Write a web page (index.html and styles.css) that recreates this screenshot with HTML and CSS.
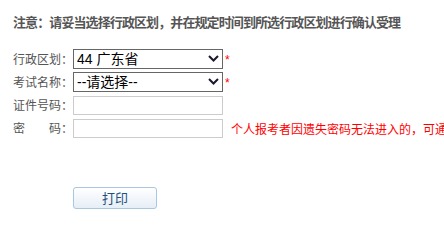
FILE: index.html
```html
<!DOCTYPE html>
<html lang="zh-CN">
<head>
<meta charset="utf-8">
<title>确认受理</title>
<link rel="stylesheet" href="styles.css">
</head>
<body>
<div class="page">
  <p class="notice">注意：请妥当选择行政区划，并在规定时间到所选行政区划进行确认受理</p>
  <form class="form">
    <div class="grid">
      <label class="label">行政区划：</label>
      <div class="field">
        <div class="select-wrap">
          <select class="select"><option>44 广东省</option></select>
          <svg class="chev" width="11" height="7" viewBox="0 0 11 7"><path d="M1 1 L5.5 5.5 L10 1" fill="none" stroke="#1a1a2e" stroke-width="2"/></svg>
        </div>
        <span class="req">*</span>
      </div>
      <label class="label">考试名称：</label>
      <div class="field">
        <div class="select-wrap">
          <select class="select"><option>--请选择--</option></select>
          <svg class="chev" width="11" height="7" viewBox="0 0 11 7"><path d="M1 1 L5.5 5.5 L10 1" fill="none" stroke="#1a1a2e" stroke-width="2"/></svg>
        </div>
        <span class="req">*</span>
      </div>
      <label class="label">证件号码：</label>
      <div class="field">
        <input class="input" type="text">
      </div>
      <label class="label">密　　码：</label>
      <div class="field">
        <input class="input" type="password">
        <span class="hint">个人报考者因遗失密码无法进入的，可通过</span>
      </div>
    </div>
    <div class="actions">
      <button class="btn" type="button">打印</button>
    </div>
  </form>
</div>
</body>
</html>
```

FILE: styles.css
```css
html, body {
  margin: 0;
  padding: 0;
  background: #fff;
}
.page {
  padding: 14px 0 0 13px;
  font-family: "Noto Sans CJK SC", "Liberation Sans", sans-serif;
  white-space: nowrap;
  overflow: hidden;
}
.notice {
  margin: 0;
  font-size: 13px;
  line-height: 16px;
  font-weight: bold;
  color: #555;
  letter-spacing: -0.9px;
}
.form {
  margin: 19px 0 0 0;
}
.grid {
  display: grid;
  grid-template-columns: 60px auto;
  grid-auto-rows: 20px;
  row-gap: 3px;
}
.label {
  font-size: 12px;
  line-height: 20px;
  color: #555;
}
.field {
  display: flex;
  align-items: center;
}
.select-wrap {
  position: relative;
  width: 150px;
  height: 20px;
}
.select {
  display: block;
  appearance: none;
  -webkit-appearance: none;
  box-sizing: border-box;
  width: 150px;
  height: 20px;
  margin: 0;
  padding: 0 0 0 3px;
  border: 1px solid #666;
  border-radius: 0;
  background: #fff;
  color: #000;
  font-family: "Liberation Sans", "Noto Sans CJK SC", sans-serif;
  font-size: 14px;
  line-height: 18px;
}
.chev {
  position: absolute;
  right: 4px;
  top: 6px;
  pointer-events: none;
}
.req {
  margin-left: 2px;
  color: #f00;
  font-size: 12px;
  line-height: 12px;
  font-family: "Liberation Sans", sans-serif;
  align-self: flex-start;
  margin-top: 5px;
}
.input {
  display: block;
  box-sizing: border-box;
  width: 150px;
  height: 19px;
  margin: 0;
  padding: 0 2px;
  border: 1px solid #ccc;
  border-radius: 0;
  background: #fff;
  outline: none;
}
.hint {
  margin-left: 8px;
  font-size: 12px;
  color: #f00;
}
.actions {
  margin: 49px 0 0 60px;
}
.btn {
  display: block;
  box-sizing: border-box;
  width: 84px;
  height: 22px;
  padding: 0;
  border: 1px solid #a9c6e2;
  border-radius: 3px;
  background: linear-gradient(#ffffff, #e6eef6);
  color: #1f4f7d;
  font-family: "Noto Sans CJK SC", sans-serif;
  font-size: 13px;
  line-height: 20px;
}
```
